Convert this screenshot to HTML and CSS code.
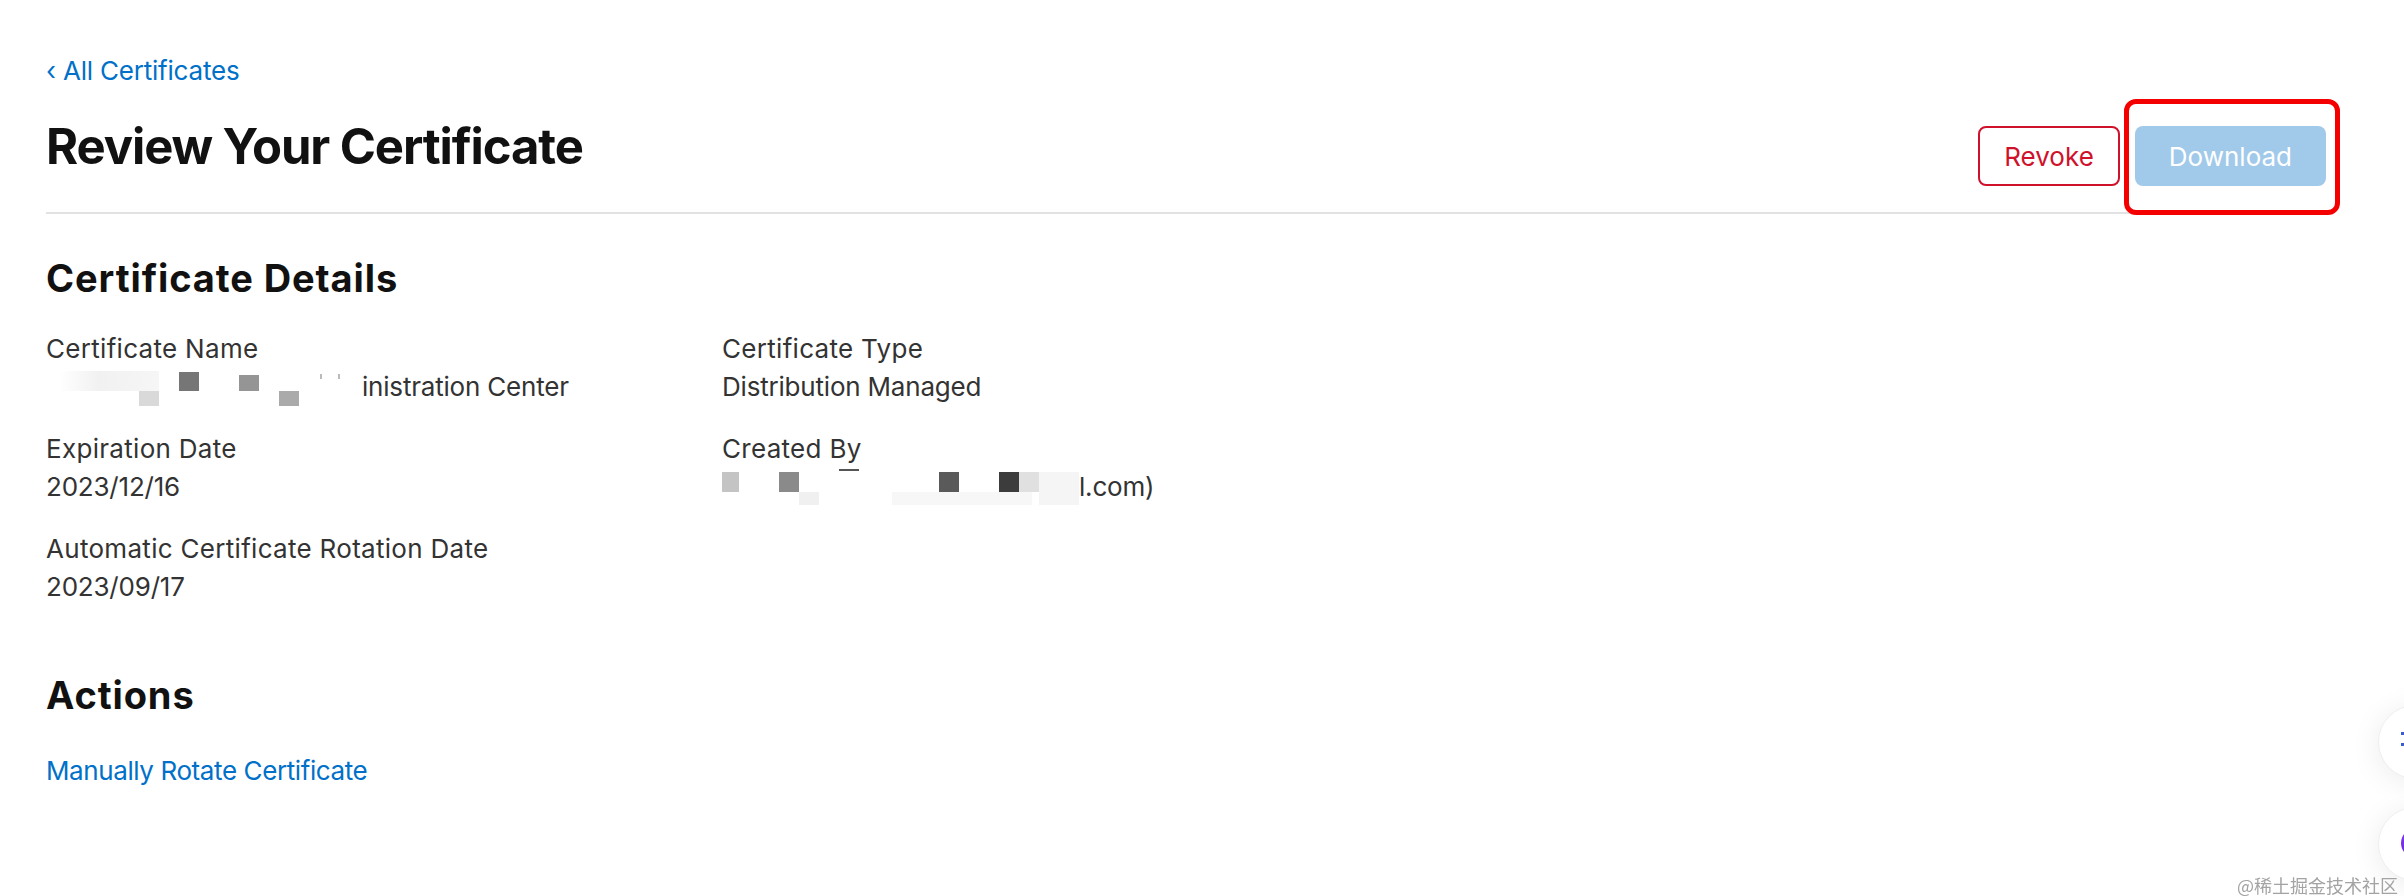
FILE: index.html
```html
<!DOCTYPE html>
<html lang="en">
<head>
    <meta charset="UTF-8">
    <meta name="viewport" content="width=device-width, initial-scale=1.0">
    <title>Review Your Certificate</title>
    <link rel="stylesheet" href="styles.css">
</head>
<body>
<div class="page">
    <a class="back-link" href="#">&lsaquo; All Certificates</a>

    <!-- 标题 + 操作按钮 -->
    <div class="page-header">
        <h1 class="page-title">Review Your Certificate</h1>
        <div class="header-actions">
            <button class="btn btn-revoke">Revoke</button>
            <div class="highlight-wrap">
                <button class="btn btn-download" disabled>Download</button>
                <span class="highlight"></span>
            </div>
        </div>
    </div>

    <h2 class="section-title">Certificate Details</h2>
    <div class="details">
        <div class="detail">
            <div class="detail-label">Certificate Name</div>
            <div class="detail-value"><span class="mosaic mosaic-name"></span>inistration Center</div>
        </div>
        <div class="detail">
            <div class="detail-label">Certificate Type</div>
            <div class="detail-value">Distribution Managed</div>
        </div>
        <div class="detail">
            <div class="detail-label">Expiration Date</div>
            <div class="detail-value">2023/12/16</div>
        </div>
        <div class="detail">
            <div class="detail-label">Created By</div>
            <div class="detail-value"><span class="mosaic mosaic-mail"></span>l.com)</div>
        </div>
        <div class="detail">
            <div class="detail-label">Automatic Certificate Rotation Date</div>
            <div class="detail-value">2023/09/17</div>
        </div>
    </div>

    <h2 class="section-title section-actions">Actions</h2>
    <a class="action-link" href="#">Manually Rotate Certificate</a>
</div>

<!-- 右下角悬浮按钮 -->
<div class="float-tools">
    <div class="float-btn"><span class="icon-list"></span></div>
    <div class="float-btn"><span class="icon-logo"></span></div>
</div>
<div class="watermark">@稀土掘金技术社区</div>
</body>
</html>
```

FILE: styles.css
```css
* {
    margin: 0;
    padding: 0;
    box-sizing: border-box;
}

body {
    font-family: Inter, "Noto Sans", sans-serif;
    color: #333;
    background: #fff;
}

.page {
    width: 2280px;
    margin-left: 46px;
    padding-top: 52px;
}

.back-link {
    display: inline-block;
    font-size: 26px;
    line-height: 38px;
    letter-spacing: -0.2px;
    color: #0070c9;
    text-decoration: none;
}

.page-header {
    display: flex;
    justify-content: space-between;
    align-items: flex-start;
    margin-top: 30px;
    padding-bottom: 26px;
    border-bottom: 2px solid #e2e2e4;
}

.page-title {
    font-size: 49px;
    line-height: 54px;
    font-weight: 700;
    letter-spacing: -1.1px;
    color: #111;
}

.header-actions {
    display: flex;
    gap: 15px;
    margin-top: 6px;
}

.btn {
    height: 60px;
    font-family: inherit;
    font-size: 26px;
    border-radius: 8px;
    padding: 0 24px;
    cursor: pointer;
}

.btn-revoke {
    color: #d0112b;
    background: #fff;
    border: 2px solid #d0112b;
}

.btn-download {
    padding: 0 34px;
    border: 0;
    color: #fff;
    background: #0070c9;
    opacity: .37;
    cursor: default;
}

/* 截图上的红色标注框 */
.highlight-wrap {
    position: relative;
}

.highlight {
    position: absolute;
    top: -27px;
    left: -11px;
    right: -14px;
    bottom: -29px;
    border: 5px solid #f40000;
    border-radius: 12px;
    pointer-events: none;
}

.section-title {
    margin-top: 42px;
    font-size: 38px;
    line-height: 44px;
    font-weight: 700;
    letter-spacing: 0.9px;
    color: #111;
}

.details {
    display: grid;
    grid-template-columns: 676px 1fr;
    row-gap: 24px;
    margin-top: 30px;
}

.detail-label,
.detail-value {
    font-size: 26px;
    line-height: 38px;
    color: #333;
}

.detail-label {
    letter-spacing: 0.3px;
}

.detail-value {
    letter-spacing: -0.2px;
}

.mosaic {
    display: inline-block;
    vertical-align: top;
    height: 38px;
    background-repeat: no-repeat;
}

.mosaic-name {
    width: 316px;
    background-image:
        linear-gradient(#767676, #767676),
        linear-gradient(#959595, #959595),
        linear-gradient(#aaa, #aaa),
        linear-gradient(#d9d9d9, #d9d9d9),
        linear-gradient(#bbb, #bbb),
        linear-gradient(#bbb, #bbb),
        linear-gradient(90deg, #fff, #f1f1f1 40%, #f6f6f6 100%);
    background-size: 20px 19px, 20px 16px, 20px 20px, 20px 15px, 2px 5px, 2px 5px, 100px 20px;
    background-position: 133px 4px, 193px 7px, 233px 23px, 93px 23px, 274px 6px, 292px 6px, 13px 3px;
}

.mosaic-mail {
    width: 357px;
    background-image:
        radial-gradient(circle at 20px 10px, #c4c4c4 19px, transparent 20px),
        linear-gradient(#8a8a8a, #8a8a8a),
        linear-gradient(#555, #555),
        linear-gradient(#f0f0f0, #f0f0f0),
        linear-gradient(#5a5a5a, #5a5a5a),
        linear-gradient(#3c3c3c, #3c3c3c),
        linear-gradient(#e0e0e0, #e0e0e0),
        linear-gradient(#f5f5f5, #f5f5f5),
        linear-gradient(#f7f7f7, #f7f7f7);
    background-size: 20px 20px, 20px 20px, 20px 2px, 20px 13px, 20px 20px, 20px 20px, 20px 20px, 40px 33px, 140px 13px;
    background-position: -3px 4px, 57px 4px, 117px 1px, 77px 24px, 217px 4px, 277px 4px, 297px 4px, 317px 4px, 170px 24px;
}

.section-actions {
    margin-top: 67px;
}

.action-link {
    display: inline-block;
    margin-top: 35px;
    font-size: 26px;
    line-height: 38px;
    letter-spacing: -0.4px;
    color: #0070c9;
    text-decoration: none;
}

/* 悬浮工具按钮 */
.float-tools {
    position: fixed;
    left: 2378px;
    top: 705px;
    display: flex;
    flex-direction: column;
    gap: 28px;
}

.float-btn {
    position: relative;
    width: 74px;
    height: 74px;
    border-radius: 50%;
    background: #fff;
    border: 1px solid #eee;
    box-shadow: 0 4px 30px rgba(0, 0, 0, .08);
}

.icon-list {
    position: absolute;
    left: 22px;
    top: 26px;
    width: 5px;
    height: 14px;
    border-top: 3px solid #3b5bd0;
    border-bottom: 3px solid #3b5bd0;
}

.icon-logo {
    position: absolute;
    left: 22px;
    top: 20px;
    width: 30px;
    height: 30px;
    border-radius: 50%;
    background: linear-gradient(160deg, #8a3cf0, #5a1fd6);
}

.watermark {
    position: fixed;
    right: 6px;
    bottom: -2px;
    font-family: "Noto Sans CJK SC", sans-serif;
    font-size: 18px;
    color: #a3a3a3;
    text-shadow: 0 0 2px #fff;
}
```
